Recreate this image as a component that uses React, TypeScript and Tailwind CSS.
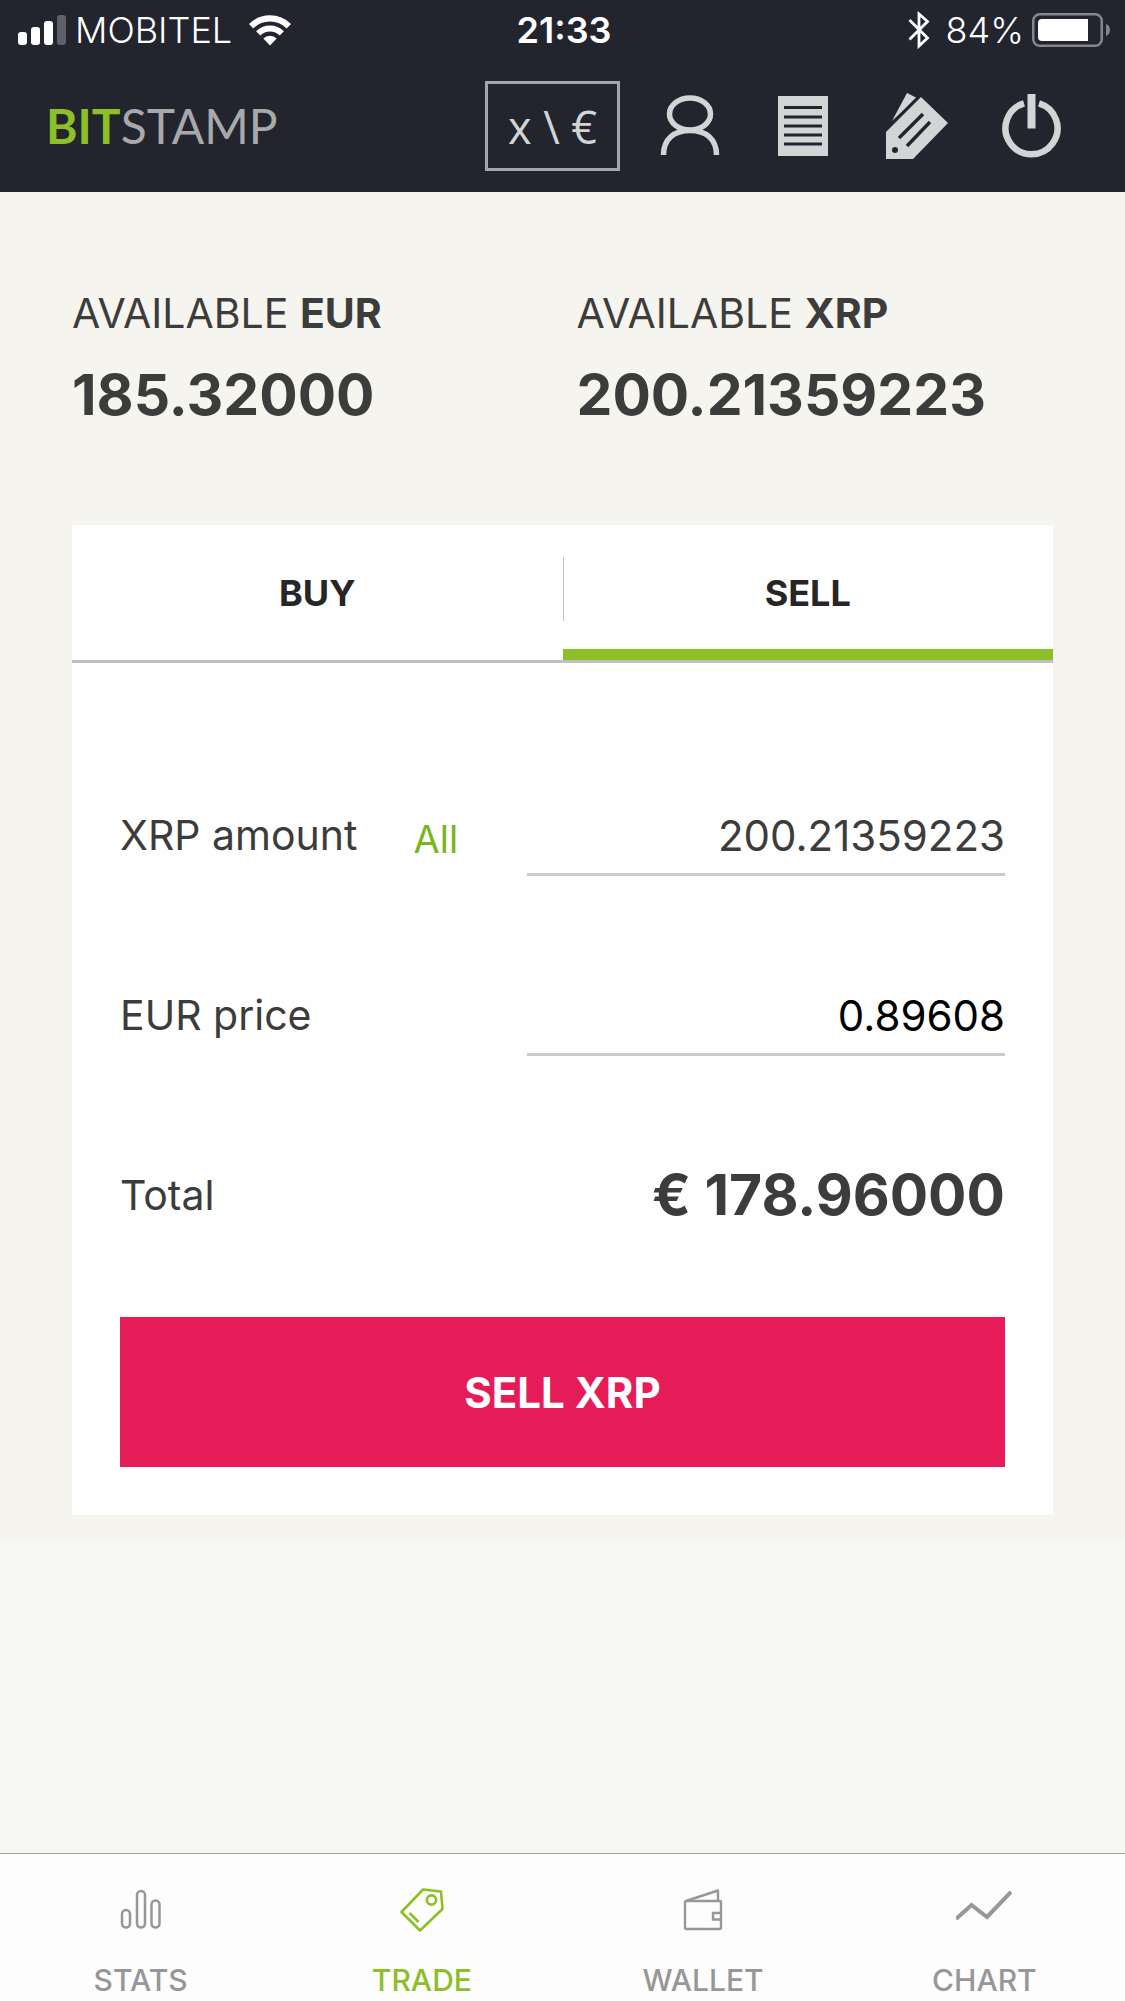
import React, { useState } from 'react';
import clsx from 'clsx';

interface Balance {
  currency: string;
  amount: string;
}

interface NavItem {
  label: string;
  icon: React.ReactNode;
  active?: boolean;
}

const balances: Balance[] = [
  { currency: 'EUR', amount: '185.32000' },
  { currency: 'XRP', amount: '200.21359223' },
];

const SignalIcon = () => (
  <svg width="48" height="30" viewBox="0 0 48 30" fill="white">
    <rect x="0" y="17" width="9" height="13" rx="3" />
    <rect x="13" y="12" width="9" height="18" rx="3" />
    <rect x="26" y="6" width="9" height="24" rx="3" />
    <rect x="39" y="0" width="9" height="30" rx="3" opacity="0.28" />
  </svg>
);

const WifiIcon = () => (
  <svg width="42" height="31" viewBox="0 0 42 31" fill="none" stroke="white">
    <path d="M2.2 11.2A26.5 26.5 0 0 1 39.8 11.2" strokeWidth="6.2" />
    <path d="M9.2 18.3A16.6 16.6 0 0 1 32.8 18.3" strokeWidth="6" />
    <path d="M14.3 23.6A9.5 9.5 0 0 1 27.7 23.6L21 30.5Z" fill="white" stroke="none" />
  </svg>
);

const BluetoothIcon = () => (
  <svg width="22" height="38" viewBox="0 0 22 38" fill="none" stroke="white" strokeWidth="2.8">
    <path d="M1.5 9L19.5 27L11 35V3L19.5 10.5L1.5 28.5" />
  </svg>
);

const BatteryIcon = () => (
  <svg width="78" height="34" viewBox="0 0 78 34">
    <rect x="1.25" y="1.25" width="68.5" height="31.5" rx="6.5" fill="none" stroke="#85868b" strokeWidth="2.5" />
    <path d="M10 6H56V28H10Q6 28 6 24V10Q6 6 10 6Z" fill="white" />
    <path d="M74 11Q78 12.5 78 17T74 23Z" fill="#85868b" />
  </svg>
);

const UserIcon = () => (
  <svg width="64" height="66" viewBox="0 0 64 66" fill="none" stroke="#d3d4d6" strokeWidth="5.500">
    <ellipse cx="32" cy="21" rx="20.500" ry="16" />
    <path d="M5.500 62C5.500 46 16 37.500 32 37.500S58.500 46 58.500 62" />
  </svg>
);

const OrdersIcon = () => (
  <svg width="64" height="66" viewBox="0 0 64 66">
    <path d="M6 3H56V63H6Z" fill="#d3d4d6" />
    <path d="M12 14.500H50M12 24H50M12 33H50M12 42H50M12 51H50" stroke="#22242e" strokeWidth="3.200" />
  </svg>
);

const TagsIcon = () => (
  <svg width="64" height="66" viewBox="0 0 64 66">
    <path d="M6 28L21 0L31 5Z" fill="#d3d4d6" />
    <path d="M0 39L35 4L62 30L27 66H0Z" fill="#d3d4d6" />
    <path d="M6 30L32 4" stroke="#22242e" strokeWidth="2" />
    <path d="M13 45L37 21M21 53L44 29" stroke="#22242e" strokeWidth="3.400" />
    <circle cx="9" cy="57" r="3" fill="#22242e" />
  </svg>
);

const PowerIcon = () => (
  <svg width="64" height="66" viewBox="0 0 64 66" fill="none" stroke="#d3d4d6">
    <path d="M24 10.300A26 26 0 1 0 39 10.300" strokeWidth="6.500" />
    <path d="M31.500 1V35.500" strokeWidth="8" />
  </svg>
);

const StatsIcon = () => (
  <svg width="44" height="44" viewBox="0 0 44 44" fill="none" stroke="currentColor" strokeWidth="2.500">
    <rect x="3" y="22" width="8" height="17.500" rx="4" />
    <rect x="18" y="3" width="8" height="36.500" rx="4" />
    <rect x="32.500" y="12.500" width="8" height="27" rx="4" />
  </svg>
);

const TradeIcon = () => (
  <svg width="44" height="44" viewBox="0 0 44 44" fill="none" stroke="currentColor" strokeWidth="2.600">
    <path d="M1.500 24L23 1.500L41 3.500L42.500 21L20 42.500Z" strokeLinejoin="round" />
    <circle cx="31.500" cy="12" r="4.600" />
    <path d="M9.500 25L18.500 34" />
  </svg>
);

const WalletIcon = () => (
  <svg width="44" height="44" viewBox="0 0 44 44" fill="none" stroke="currentColor" strokeWidth="2.400">
    <rect x="4" y="13" width="36" height="28" rx="1.500" />
    <path d="M5 13L37 2.500V13" strokeLinejoin="round" />
    <path d="M40 25H32V31.500H40" />
  </svg>
);

const ChartIcon = () => (
  <svg width="56" height="44" viewBox="0 0 56 44" fill="none" stroke="currentColor" strokeWidth="4">
    <path d="M0 31L15.500 17L31 29L55 4" />
  </svg>
);

const headerActions = [
  { label: 'Account', icon: <UserIcon /> },
  { label: 'Orders', icon: <OrdersIcon /> },
  { label: 'Fees', icon: <TagsIcon /> },
  { label: 'Log out', icon: <PowerIcon /> },
];

const navItems: NavItem[] = [
  { label: 'STATS', icon: <StatsIcon /> },
  { label: 'TRADE', icon: <TradeIcon />, active: true },
  { label: 'WALLET', icon: <WalletIcon /> },
  { label: 'CHART', icon: <ChartIcon /> },
];

const StatusBar = () => (
  <div className="grid h-[60px] grid-cols-[1fr_auto_1fr] items-center pl-[18px] pr-[15px] text-4xl text-white">
    <div className="flex items-center gap-[9px]">
      <SignalIcon />
      <span className="font-light">MOBITEL</span>
      <span className="ml-2">
        <WifiIcon />
      </span>
    </div>
    <span className="font-semibold">21:33</span>
    <div className="flex items-center justify-end gap-2">
      <span className="mr-2">
        <BluetoothIcon />
      </span>
      <span className="font-light">84%</span>
      <BatteryIcon />
    </div>
  </div>
);

const Header = () => (
  <header className="bg-[#22242e]">
    <StatusBar />
    <div className="flex h-[132px] items-center justify-between pl-[46px] pr-[61px]">
      <a href="#" className="font-['Lato',sans-serif] text-5xl text-[#a9a9ab]">
        <span className="font-bold text-[#8dbf27]">BIT</span>STAMP
      </a>
      <div className="flex items-center gap-[38px]">
        <button
          type="button"
          className="h-[90px] w-[135px] border-3 border-[#a5a5ab] font-['Open_Sans',sans-serif] text-[45px] leading-none text-[#d3d4d6]"
        >
          x \ €
        </button>
        <div className="flex items-center gap-[50px]">
          {headerActions.map((action) => (
            <button key={action.label} type="button" aria-label={action.label}>
              {action.icon}
            </button>
          ))}
        </div>
      </div>
    </div>
  </header>
);

const tabs = ['BUY', 'SELL'];

const TradeForm = () => {
  const [side, setSide] = useState('SELL');
  const [amount, setAmount] = useState('200.21359223');
  const [price, setPrice] = useState('0.89608');

  return (
    <section className="bg-[#fefefe]">
      <div role="tablist" className="relative grid grid-cols-2 border-b-3 border-[#c0c0c0]">
        {tabs.map((tab) => (
          <button
            key={tab}
            type="button"
            role="tab"
            aria-selected={side === tab}
            onClick={() => setSide(tab)}
            className={clsx(
              'h-[135px] border-b-11 pt-3 text-4xl font-bold text-[#262626]',
              side === tab ? 'border-[#8dbf27]' : 'border-transparent'
            )}
          >
            {tab}
          </button>
        ))}
        <span className="absolute left-1/2 top-8 h-16 w-px bg-[#c0c0c0]" />
      </div>

      <form className="px-12 pb-12 pt-[120px]" onSubmit={(e) => e.preventDefault()}>
        <div className="flex h-[180px] items-start">
          <label htmlFor="amount" className="pt-[28px] leading-[48px]">
            XRP amount
          </label>
          <button
            type="button"
            onClick={() => setAmount(balances[1].amount)}
            className="ml-14 pt-8 text-[38px] leading-[48px] text-[#7ab51d]"
          >
            All
          </button>
          <input
            id="amount"
            value={amount}
            onChange={(e) => setAmount(e.target.value)}
            className="ml-auto h-[93px] w-[54%] border-b-3 border-[#cbcbcb] bg-transparent pb-[14px] pt-[28px] text-right text-[42px] leading-[48px] outline-none"
          />
        </div>
        <div className="flex h-[180px] items-start">
          <label htmlFor="price" className="pt-[28px] leading-[48px]">
            EUR price
          </label>
          <input
            id="price"
            value={price}
            onChange={(e) => setPrice(e.target.value)}
            className="ml-auto h-[93px] w-[54%] border-b-3 border-[#cbcbcb] bg-transparent pb-[14px] pt-[28px] text-right text-[42px] leading-[48px] text-black outline-none"
          />
        </div>
        <div className="flex h-[174px] items-start justify-between pt-[28px] leading-[48px]">
          <span>Total</span>
          <output className="text-[57px] font-bold">€ 178.96000</output>
        </div>
        <button type="submit" className="h-[150px] w-full bg-[#e51c58] text-[42px] font-bold text-white">
          SELL XRP
        </button>
      </form>
    </section>
  );
};

const BottomNav = () => (
  <nav className="grid grid-cols-4 border-t border-[#a3a3a3] bg-[#fdfdfd]">
    {navItems.map((item) => (
      <a
        key={item.label}
        href="#"
        className={clsx(
          'flex h-[147px] flex-col items-center gap-[28px] pt-[34px] text-[30px] font-medium leading-[40px]',
          item.active ? 'text-[#8dbf27]' : 'text-[#979797]'
        )}
      >
        {item.icon}
        <span>{item.label}</span>
      </a>
    ))}
  </nav>
);

export default function App() {
  return (
    <div className="flex min-h-screen flex-col bg-[#f6f7f2] font-['Inter',sans-serif] text-[41px] text-[#3c3c3c]">
      <Header />
      <main className="flex-1">
        <div className="bg-[#f5f4ee] px-[72px] pb-[26px]">
          <div className="grid grid-cols-2 gap-7 pb-[90px] pt-[97px]">
            {balances.map((balance) => (
              <div key={balance.currency}>
                <h2 className="leading-[48px]">
                  AVAILABLE <strong>{balance.currency}</strong>
                </h2>
                <p className="mt-[18px] text-[57px] font-bold leading-[80px]">{balance.amount}</p>
              </div>
            ))}
          </div>
          <TradeForm />
        </div>
      </main>
      <BottomNav />
    </div>
  );
}
